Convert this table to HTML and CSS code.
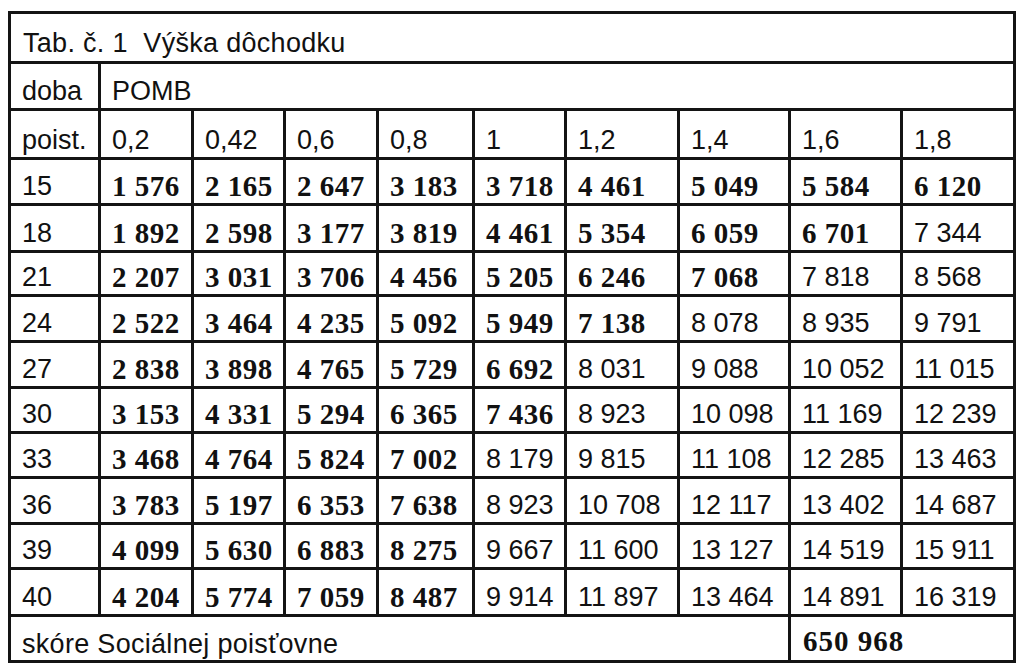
FILE: index.html
```html
<!DOCTYPE html>
<html lang="sk">
<head>
<meta charset="utf-8">
<title>Tab. č. 1 Výška dôchodku</title>
<link rel="stylesheet" href="styles.css">
</head>
<body>
<div class="tbl">
  <div class="c title">Tab. č. 1&nbsp;&nbsp;Výška dôchodku</div>

  <div class="c">doba</div>
  <div class="c span-rest">POMB</div>

  <div class="c">poist.</div>
  <div class="c">0,2</div><div class="c">0,42</div><div class="c">0,6</div><div class="c">0,8</div><div class="c">1</div><div class="c">1,2</div><div class="c">1,4</div><div class="c">1,6</div><div class="c">1,8</div>

  <div class="c">15</div>
  <div class="c b">1 576</div><div class="c b">2 165</div><div class="c b">2 647</div><div class="c b">3 183</div><div class="c b">3 718</div><div class="c b">4 461</div><div class="c b">5 049</div><div class="c b">5 584</div><div class="c b">6 120</div>

  <div class="c">18</div>
  <div class="c b">1 892</div><div class="c b">2 598</div><div class="c b">3 177</div><div class="c b">3 819</div><div class="c b">4 461</div><div class="c b">5 354</div><div class="c b">6 059</div><div class="c b">6 701</div><div class="c">7 344</div>

  <div class="c">21</div>
  <div class="c b">2 207</div><div class="c b">3 031</div><div class="c b">3 706</div><div class="c b">4 456</div><div class="c b">5 205</div><div class="c b">6 246</div><div class="c b">7 068</div><div class="c">7 818</div><div class="c">8 568</div>

  <div class="c">24</div>
  <div class="c b">2 522</div><div class="c b">3 464</div><div class="c b">4 235</div><div class="c b">5 092</div><div class="c b">5 949</div><div class="c b">7 138</div><div class="c">8 078</div><div class="c">8 935</div><div class="c">9 791</div>

  <div class="c">27</div>
  <div class="c b">2 838</div><div class="c b">3 898</div><div class="c b">4 765</div><div class="c b">5 729</div><div class="c b">6 692</div><div class="c">8 031</div><div class="c">9 088</div><div class="c">10 052</div><div class="c">11 015</div>

  <div class="c">30</div>
  <div class="c b">3 153</div><div class="c b">4 331</div><div class="c b">5 294</div><div class="c b">6 365</div><div class="c b">7 436</div><div class="c">8 923</div><div class="c">10 098</div><div class="c">11 169</div><div class="c">12 239</div>

  <div class="c">33</div>
  <div class="c b">3 468</div><div class="c b">4 764</div><div class="c b">5 824</div><div class="c b">7 002</div><div class="c">8 179</div><div class="c">9 815</div><div class="c">11 108</div><div class="c">12 285</div><div class="c">13 463</div>

  <div class="c">36</div>
  <div class="c b">3 783</div><div class="c b">5 197</div><div class="c b">6 353</div><div class="c b">7 638</div><div class="c">8 923</div><div class="c">10 708</div><div class="c">12 117</div><div class="c">13 402</div><div class="c">14 687</div>

  <div class="c">39</div>
  <div class="c b">4 099</div><div class="c b">5 630</div><div class="c b">6 883</div><div class="c b">8 275</div><div class="c">9 667</div><div class="c">11 600</div><div class="c">13 127</div><div class="c">14 519</div><div class="c">15 911</div>

  <div class="c">40</div>
  <div class="c b">4 204</div><div class="c b">5 774</div><div class="c b">7 059</div><div class="c b">8 487</div><div class="c">9 914</div><div class="c">11 897</div><div class="c">13 464</div><div class="c">14 891</div><div class="c">16 319</div>

  <div class="c foot-label">skóre Sociálnej poisťovne</div>
  <div class="c b foot-value">650 968</div>
</div>
</body>
</html>
```

FILE: styles.css
```css
html, body {
  background: #ffffff;
}

body {
  margin: 11px 0 0 8px;
}

.tbl {
  display: inline-grid;
  grid-template-columns: 87px 90px 89px 90px 93px 89px 110px 108px 109px 110px;
  grid-template-rows: 47px 44px 46px 43px 44px 41px 43px 43px 42px 42px 43px 42px 44px 43px;
  gap: 3px;
  padding: 3px;
  background: #141414;
  font-family: "Liberation Sans", Arial, sans-serif;
  font-size: 27px;
  color: #111111;
}

.c {
  background: #ffffff;
  display: flex;
  align-items: flex-end;
  padding: 0 0 3px 11px;
  line-height: 27px;
  white-space: nowrap;
  overflow: hidden;
}

.title {
  grid-column: 1 / -1;
  padding-left: 12px;
  padding-bottom: 4px;
  letter-spacing: 0.3px;
}

.span-rest {
  grid-column: 2 / -1;
}

.b {
  font-family: "Liberation Serif", "Times New Roman", serif;
  font-weight: bold;
  font-size: 29px;
  letter-spacing: 0.5px;
}

.foot-label {
  grid-column: 1 / 9;
  padding-bottom: 2px;
  letter-spacing: 0.3px;
}

.foot-value {
  grid-column: 9 / -1;
  padding-left: 12px;
  padding-bottom: 5px;
  letter-spacing: 1px;
}
```
